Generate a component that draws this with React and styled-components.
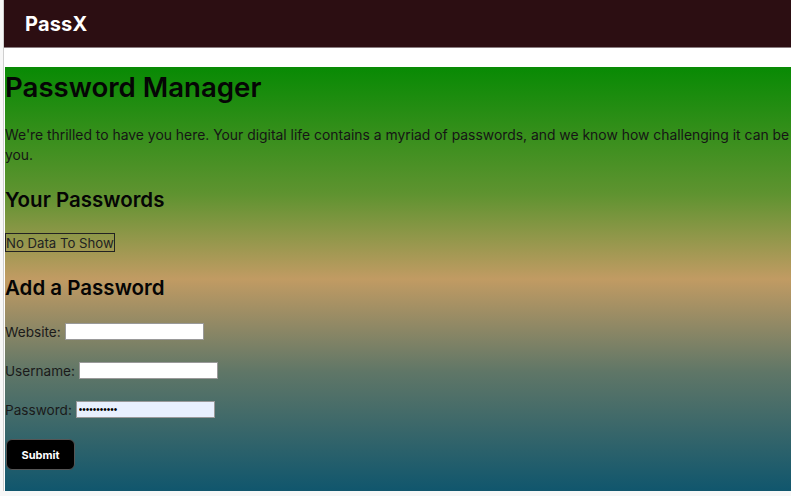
import React from "react";
import styled, { createGlobalStyle } from "styled-components";

const Global = createGlobalStyle`
  html, body { margin: 0; padding: 0; background: #f7f7f7; overflow: hidden; }
  body { font-family: "Inter", "Noto Sans", sans-serif; color: #111; }
`;

const Frame = styled.div`
  margin-left: 3px;
  border-left: 1px solid #cfcfcf;
  background: #fff;
  height: 491px;
  overflow: hidden;
`;

const Header = styled.header`
  height: 48px;
  background: #2c0e12;
  border-bottom: 1px solid #8a7d80;
  box-sizing: border-box;
  display: flex;
  align-items: center;
  padding-left: 21px;
`;

const Logo = styled.div`
  color: #fff;
  font-weight: 700;
  font-size: 20px;
  letter-spacing: 0.2px;
`;

const Main = styled.main`
  margin-top: 19px;
  margin-left: 1px;
  height: 424px;
  width: 822px;
  background: linear-gradient(180deg, #088a04 0%, #5f9330 30%, #c19b63 50%, #5f7667 72%, #10566d 100%);
  box-sizing: border-box;
  padding-top: 4px;
`;

const Title = styled.h1`
  margin: 0;
  font-size: 27.6px;
  font-weight: 600;
  line-height: 32px;
  color: #050505;
`;

const Text = styled.p`
  margin: 22px 0 0;
  font-size: 13.9px;
  line-height: 20px;
  color: #151515;
`;

const Heading = styled.h2`
  margin: ${(p) => p.$top}px 0 0;
  font-size: 20.5px;
  font-weight: 600;
  line-height: 24px;
  color: #050505;
`;

const Empty = styled.div`
  display: inline-block;
  margin-top: 21px;
  border: 1px solid #222;
  font-size: 13.2px;
  line-height: 16px;
  padding: 1px 0 0;
  color: #222;
`;

const Form = styled.form`
  display: flex;
  flex-direction: column;
  align-items: flex-start;
  gap: 22px;
  margin-top: 23px;
`;

const Field = styled.label`
  display: flex;
  align-items: center;
  gap: 4px;
  font-size: 13.6px;
  color: #1a1a1a;
  height: 17px;
`;

const Input = styled.input`
  box-sizing: border-box;
  width: 139px;
  height: 17px;
  border: 1px solid #999;
  background: ${(p) => (p.$filled ? "#e8f0fe" : "#fff")};
  font-size: 10px;
  padding: 0 2px;
  outline: none;
`;

const Submit = styled.button`
  margin-left: 1px;
  margin-top: -1px;
  width: 69px;
  height: 31px;
  background: #000;
  color: #fff;
  border: 1px solid #555;
  border-radius: 6px;
  font-family: "Inter", sans-serif;
  font-weight: 700;
  font-size: 11px;
  cursor: pointer;
`;

export default function App() {
  return (
    <>
      <Global />
      <Frame>
        <Header>
          <Logo>PassX</Logo>
        </Header>
        <Main>
          <Title>Password Manager</Title>
          <Text>
            We're thrilled to have you here. Your digital life contains a myriad of passwords, and we know how challenging it can be for you.
          </Text>
          <Heading $top={23}>Your Passwords</Heading>
          <Empty>No Data To Show</Empty>
          <Heading $top={24}>Add a Password</Heading>
          <Form onSubmit={(e) => e.preventDefault()}>
            <Field>
              Website: <Input type="text" />
            </Field>
            <Field>
              Username: <Input type="text" />
            </Field>
            <Field>
              Password: <Input type="password" $filled defaultValue="aaaaaaaaaaa" />
            </Field>
            <Submit type="submit">Submit</Submit>
          </Form>
        </Main>
      </Frame>
    </>
  );
}
